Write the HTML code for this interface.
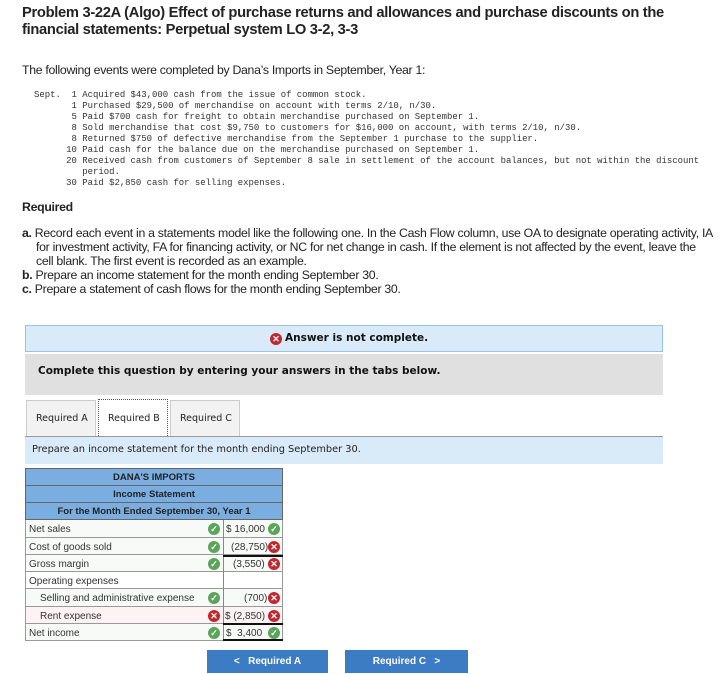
<!DOCTYPE html>
<html><head><meta charset="utf-8"><style>
*{margin:0;padding:0;box-sizing:border-box}
body{width:728px;height:674px;background:#fff;font-family:"Liberation Sans",sans-serif;color:#222;position:relative;overflow:hidden}
.a{position:absolute;white-space:nowrap}
.t{font-weight:bold;font-size:14.7px;color:#222;letter-spacing:-0.3px}
.p{font-size:12.3px;letter-spacing:-0.3px}
.m{font-family:"Liberation Mono",monospace;font-size:8.95px;line-height:11px;color:#333;white-space:pre}
.v{font-family:"DejaVu Sans",sans-serif}
.ic{position:absolute;width:12px;height:12px;border-radius:50%;color:#fff;font-size:9px;line-height:12px;text-align:center;font-weight:bold}
.g{background:#5aa55a}.r{background:#c4262e}
.row{position:absolute;left:25px;width:258px;border:1px solid #999;border-top:none;font-size:10px;color:#333;background:#f7faf7}
.row span{position:absolute;top:4px}
</style></head><body>
<div class="a t" style="left:22px;top:5px">Problem 3-22A (Algo) Effect of purchase returns and allowances and purchase discounts on the</div>
<div class="a t" style="left:22px;top:22px">financial statements: Perpetual system LO 3-2, 3-3</div>
<div class="a p" style="left:22px;top:63px">The following events were completed by Dana’s Imports in September, Year 1:</div>
<div class="a m" style="left:34px;top:90px">Sept.  1 Acquired $43,000 cash from the issue of common stock.
       1 Purchased $29,500 of merchandise on account with terms 2/10, n/30.
       5 Paid $700 cash for freight to obtain merchandise purchased on September 1.
       8 Sold merchandise that cost $9,750 to customers for $16,000 on account, with terms 2/10, n/30.
       8 Returned $750 of defective merchandise from the September 1 purchase to the supplier.
      10 Paid cash for the balance due on the merchandise purchased on September 1.
      20 Received cash from customers of September 8 sale in settlement of the account balances, but not within the discount
         period.
      30 Paid $2,850 cash for selling expenses.</div>
<div class="a p" style="left:22px;top:200px;font-weight:bold">Required</div>
<div class="a p" style="left:22px;top:226px"><b>a.</b> Record each event in a statements model like the following one. In the Cash Flow column, use OA to designate operating activity, IA</div>
<div class="a p" style="left:36px;top:240px">for investment activity, FA for financing activity, or NC for net change in cash. If the element is not affected by the event, leave the</div>
<div class="a p" style="left:36px;top:254px">cell blank. The first event is recorded as an example.</div>
<div class="a p" style="left:22px;top:268px"><b>b.</b> Prepare an income statement for the month ending September 30.</div>
<div class="a p" style="left:22px;top:282px"><b>c.</b> Prepare a statement of cash flows for the month ending September 30.</div>

<div class="a" style="left:25px;top:325px;width:638px;height:27px;background:#d9ebf8;border:1px solid #9cc3e5"></div>
<div class="ic r" style="left:270px;top:333px">✕</div>
<div class="a v" style="left:285px;top:332px;font-size:10.5px;font-weight:bold;color:#111">Answer is not complete.</div>
<div class="a" style="left:25px;top:354px;width:638px;height:41px;background:#e0e0e0"></div>
<div class="a v" style="left:38px;top:365px;font-size:10.5px;font-weight:bold;color:#111">Complete this question by entering your answers in the tabs below.</div>

<div class="a" style="left:26px;top:400px;width:70px;height:37px;background:#f2f2f2;border:1px solid #ccc"></div>
<div class="a v" style="left:36px;top:413px;font-size:9.5px">Required A</div>
<div class="a" style="left:98px;top:399px;width:70px;height:39px;background:#fff;border:1px dotted #557"></div>
<div class="a v" style="left:108px;top:413px;font-size:9.5px">Required B</div>
<div class="a" style="left:170px;top:400px;width:70px;height:37px;background:#f2f2f2;border:1px solid #ccc"></div>
<div class="a v" style="left:180px;top:413px;font-size:9.5px">Required C</div>
<div class="a" style="left:25px;top:436px;width:638px;height:28px;background:#d9ebf8;border-top:1px solid #999"></div>
<div class="a v" style="left:32px;top:444px;font-size:9.8px">Prepare an income statement for the month ending September 30.</div>

<div class="a" style="left:25px;top:468px;width:258px;height:52px;background:#7aaee0;border:1px solid #666"></div>
<div class="a" style="left:25px;top:485px;width:258px;border-top:1px solid #666"></div>
<div class="a" style="left:25px;top:502px;width:258px;border-top:1px solid #666"></div>
<div class="a" style="left:25px;top:472px;width:258px;text-align:center;font-size:9.5px;font-weight:bold;color:#222">DANA'S IMPORTS</div>
<div class="a" style="left:25px;top:489px;width:258px;text-align:center;font-size:9.5px;font-weight:bold;color:#222">Income Statement</div>
<div class="a" style="left:25px;top:506px;width:258px;text-align:center;font-size:9.5px;font-weight:bold;color:#222">For the Month Ended September 30, Year 1</div>

<div class="row" style="top:520px;height:18px"><span style="left:3px">Net sales</span><span style="left:200px">$ 16,000</span></div>
<div class="row" style="top:538px;height:17px"><span style="left:3px">Cost of goods sold</span><span style="left:205px">(28,750)</span></div>
<div class="row" style="top:555px;height:17px"><span style="left:3px">Gross margin</span><span style="left:207px">(3,550)</span></div>
<div class="row" style="top:572px;height:17px;background:#fff"><span style="left:3px">Operating expenses</span></div>
<div class="row" style="top:589px;height:18px"><span style="left:14px">Selling and administrative expense</span><span style="left:218px">(700)</span></div>
<div class="row" style="top:607px;height:17px;background:#fdf3f3"><span style="left:14px">Rent expense</span><span style="left:199px">$ (2,850)</span></div>
<div class="row" style="top:624px;height:17px"><span style="left:3px">Net income</span><span style="left:200px">$&nbsp;&nbsp;3,400</span></div>
<div class="a" style="left:223px;top:520px;height:121px;border-left:1px solid #888"></div>
<div class="a" style="left:223px;top:555px;width:60px;border-top:2px solid #111"></div>
<div class="a" style="left:223px;top:623px;width:60px;border-top:2px solid #111"></div>
<div class="a" style="left:223px;top:639px;width:60px;border-top:2px solid #111"></div>

<div class="ic g" style="left:208px;top:523px">✓</div><div class="ic g" style="left:268px;top:523px">✓</div>
<div class="ic g" style="left:208px;top:541px">✓</div><div class="ic r" style="left:268px;top:541px">✕</div>
<div class="ic g" style="left:208px;top:558px">✓</div><div class="ic r" style="left:268px;top:558px">✕</div>
<div class="ic g" style="left:208px;top:592px">✓</div><div class="ic r" style="left:268px;top:592px">✕</div>
<div class="ic r" style="left:208px;top:610px">✕</div><div class="ic r" style="left:268px;top:610px">✕</div>
<div class="ic g" style="left:208px;top:627px">✓</div><div class="ic g" style="left:268px;top:627px">✓</div>

<div class="a" style="left:207px;top:650px;width:121px;height:23px;background:#3b7cc4;color:#fff;font-size:10px;font-weight:bold;line-height:23px;text-align:center">&lt;&nbsp;&nbsp; Required A</div>
<div class="a" style="left:345px;top:650px;width:123px;height:23px;background:#3b7cc4;color:#fff;font-size:10px;font-weight:bold;line-height:23px;text-align:center">Required C &nbsp;&nbsp;&gt;</div>
</body></html>
